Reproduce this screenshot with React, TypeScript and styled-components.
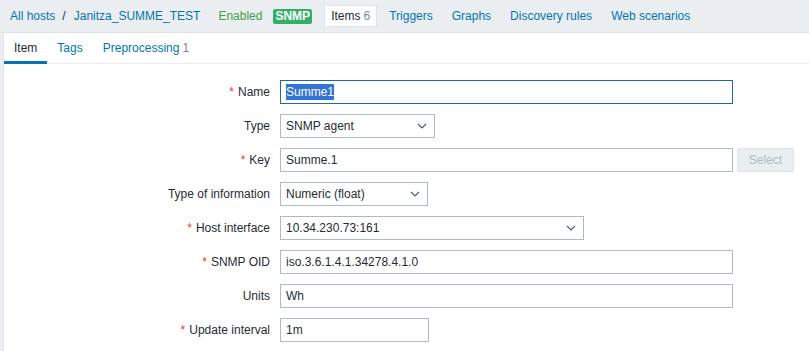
import { Fragment } from 'react';
import styled, { createGlobalStyle } from 'styled-components';

const GlobalStyle = createGlobalStyle`
  html, body {
    margin: 0;
    padding: 0;
    background: #ebeef0;
    font-family: "Liberation Sans", Arial, sans-serif;
    font-size: 12px;
    color: #1f2c33;
    overflow: hidden;
  }
`;

const TopBar = styled.div`
  display: flex;
  align-items: center;
  height: 32px;
  padding-left: 10px;
  border-bottom: 1px solid #dfe4e7;
`;

const Breadcrumbs = styled.ul`
  display: flex;
  align-items: center;
  margin: 0;
  padding: 0;
  list-style: none;
`;

const Crumb = styled.li`
  display: flex;
  align-items: center;

  &:not(:last-child)::after {
    content: '/';
    color: #1f2c33;
    margin: 0 8px 0 7px;
  }
`;

const Link = styled.a`
  color: #0275b8;
  text-decoration: none;
  cursor: pointer;
`;

const Status = styled.span`
  color: #429e47;
  margin-left: 18px;
`;

const Badge = styled.span`
  background: #34af67;
  color: #fff;
  font-weight: bold;
  font-size: 12px;
  line-height: 15px;
  padding: 0 2px;
  border-radius: 2px;
  margin-left: 11px;
`;

const Nav = styled.ul`
  display: flex;
  align-items: center;
  gap: 5px;
  margin: 0 0 0 12px;
  padding: 0;
  list-style: none;
`;

const NavItem = styled.li<{ $selected?: boolean }>`
  display: flex;
  align-items: center;
  height: 22px;
  padding: 0 6px;
  box-sizing: border-box;
  border: 1px solid ${({ $selected }) => ($selected ? '#dfe4e7' : 'transparent')};
  background: ${({ $selected }) => ($selected ? '#fff' : 'transparent')};
  color: #1f2c33;
`;

const Count = styled.sup`
  color: #768d99;
  font-size: 12px;
  vertical-align: baseline;
  margin-left: 3px;
`;

const Panel = styled.div`
  margin-left: 3px;
  background: #fff;
  border-left: 1px solid #dfe4e7;
  min-height: 330px;
`;

const Tabs = styled.ul`
  display: flex;
  margin: 0;
  padding: 0;
  list-style: none;
  border-bottom: 1px solid #ebeef0;
  height: 30px;
`;

const Tab = styled.li<{ $active?: boolean }>`
  display: flex;
  align-items: center;
  padding: 1px 10px 0;
  color: ${({ $active }) => ($active ? '#1f2c33' : '#0275b8')};
  border-bottom: 3px solid ${({ $active }) => ($active ? '#0275b8' : 'transparent')};
  margin-bottom: -1px;
`;

const Form = styled.div`
  display: grid;
  grid-template-columns: 256px 1fr;
  column-gap: 10px;
  row-gap: 10px;
  padding: 16px 10px;
`;

const Label = styled.label`
  display: flex;
  align-items: center;
  justify-content: flex-end;
  height: 24px;
`;

const Asterisk = styled.span`
  color: #e33734;
  margin-right: 4px;
`;

const Cell = styled.div`
  display: flex;
  align-items: center;
  gap: 4px;
`;

const Field = styled.div<{ $width: number; $focused?: boolean }>`
  display: flex;
  align-items: center;
  justify-content: space-between;
  box-sizing: border-box;
  width: ${({ $width }) => $width}px;
  height: 24px;
  padding: 0 7px 0 5px;
  border: 1px solid ${({ $focused }) => ($focused ? '#1e6a9e' : '#acbbc2')};
  background: #fff;
  color: #1f2c33;
  white-space: nowrap;
`;

const Selected = styled.span`
  background: #3373d6;
  color: #fff;
  padding: 1px 0;
`;

const GreyButton = styled.button`
  height: 24px;
  width: 57px;
  padding: 0;
  font-family: inherit;
  font-size: 12px;
  color: #acbbc2;
  background: #ebeef0;
  border: 1px solid #dfe4e7;
  border-radius: 2px;
`;

const Chevron = () => (
  <svg width="10" height="6" viewBox="0 0 10 6">
    <path d="M1 1l4 4 4-4" fill="none" stroke="#4f5f68" strokeWidth="1.2" />
  </svg>
);

type Row = {
  label: string;
  required?: boolean;
  value: string;
  width: number;
  select?: boolean;
  focused?: boolean;
  button?: string;
};

const rows: Row[] = [
  { label: 'Name', required: true, value: 'Summe1', width: 453, focused: true },
  { label: 'Type', value: 'SNMP agent', width: 155, select: true },
  { label: 'Key', required: true, value: 'Summe.1', width: 453, button: 'Select' },
  { label: 'Type of information', value: 'Numeric (float)', width: 148, select: true },
  { label: 'Host interface', required: true, value: '10.34.230.73:161', width: 304, select: true },
  { label: 'SNMP OID', required: true, value: 'iso.3.6.1.4.1.34278.4.1.0', width: 453 },
  { label: 'Units', value: 'Wh', width: 453 },
  { label: 'Update interval', required: true, value: '1m', width: 149 },
];

const App = () => (
  <>
    <GlobalStyle />
    <TopBar>
      <Breadcrumbs>
        <Crumb><Link>All hosts</Link></Crumb>
        <Crumb><Link>Janitza_SUMME_TEST</Link></Crumb>
      </Breadcrumbs>
      <Status>Enabled</Status>
      <Badge>SNMP</Badge>
      <Nav>
        <NavItem $selected>Items<Count>6</Count></NavItem>
        <NavItem><Link>Triggers</Link></NavItem>
        <NavItem><Link>Graphs</Link></NavItem>
        <NavItem><Link>Discovery rules</Link></NavItem>
        <NavItem><Link>Web scenarios</Link></NavItem>
      </Nav>
    </TopBar>
    <Panel>
      <Tabs>
        <Tab $active>Item</Tab>
        <Tab>Tags</Tab>
        <Tab>Preprocessing<Count>1</Count></Tab>
      </Tabs>
      <Form>
        {rows.map((row) => (
          <Fragment key={row.label}>
            <Label>
              {row.required && <Asterisk>*</Asterisk>}
              {row.label}
            </Label>
            <Cell>
              <Field $width={row.width} $focused={row.focused}>
                {row.focused ? <Selected>{row.value}</Selected> : <span>{row.value}</span>}
                {row.select && <Chevron />}
              </Field>
              {row.button && <GreyButton disabled>{row.button}</GreyButton>}
            </Cell>
          </Fragment>
        ))}
      </Form>
    </Panel>
  </>
);

export default App;
